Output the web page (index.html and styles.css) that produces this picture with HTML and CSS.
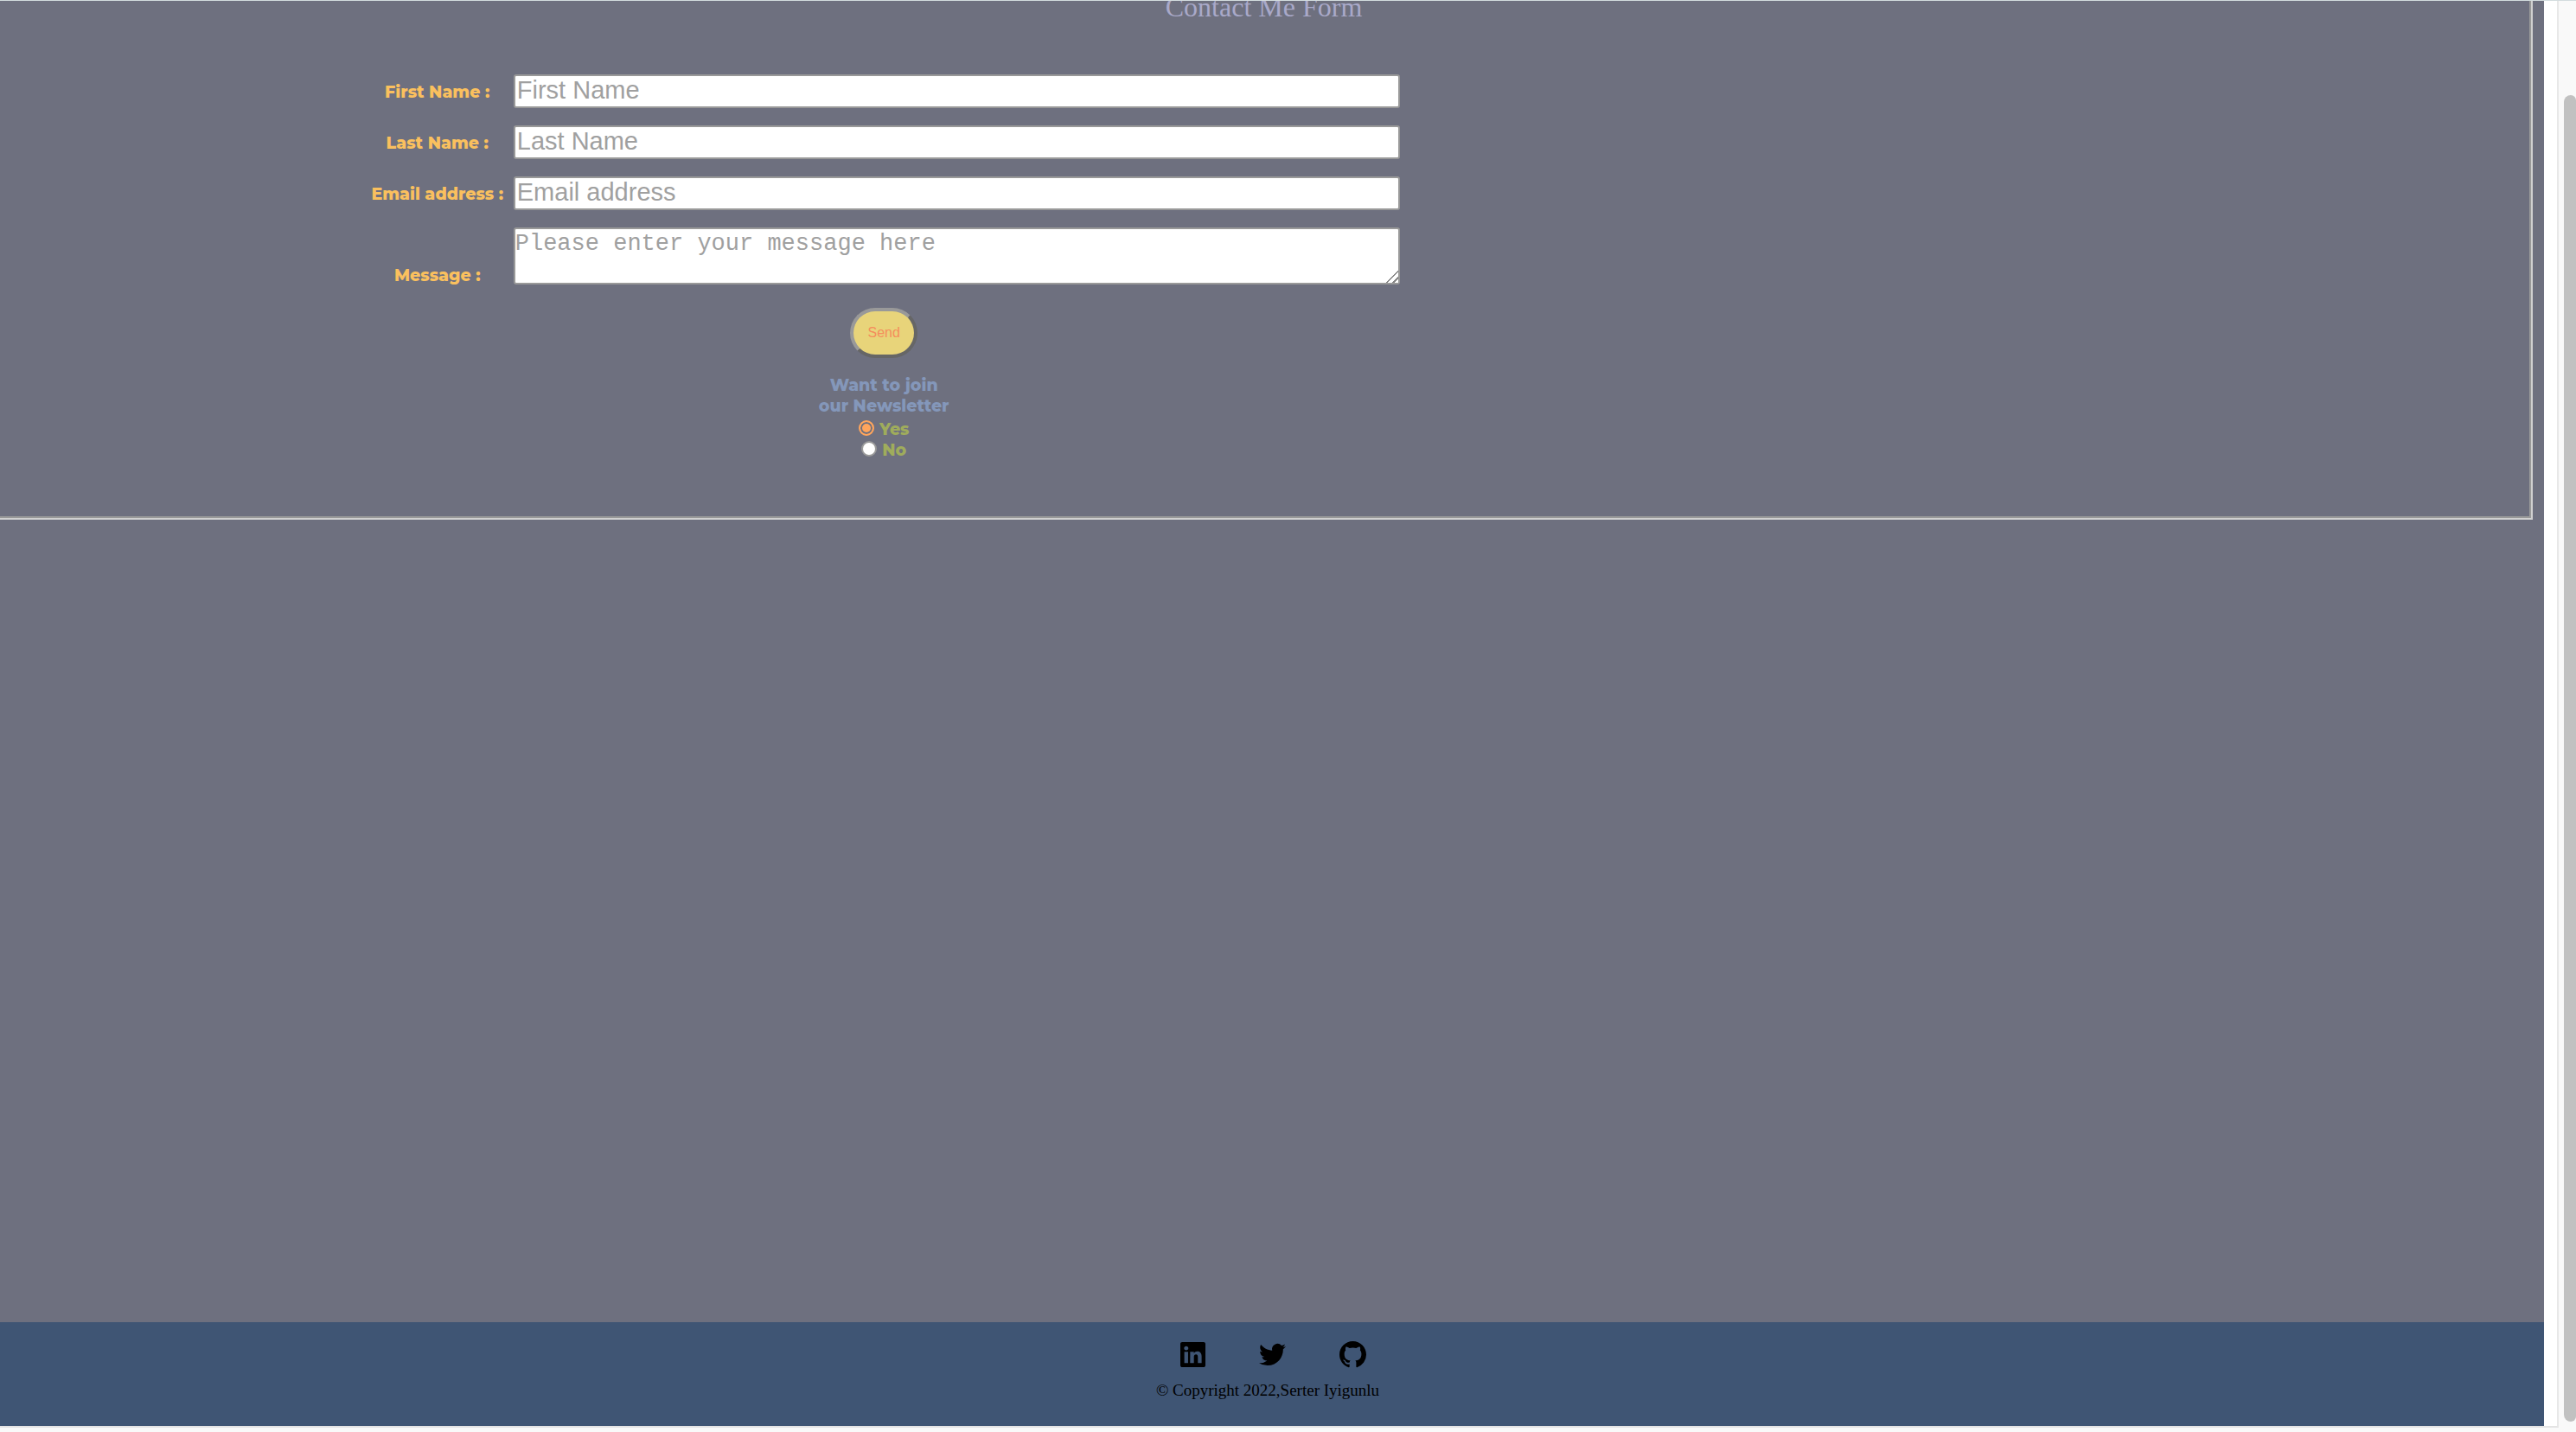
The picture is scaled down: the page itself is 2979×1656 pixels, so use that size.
FILE: index.html
```html
<!DOCTYPE html>
<html lang="en">
<head>
<meta charset="utf-8">
<title>Contact Me</title>
<link rel="stylesheet" href="styles.css">
</head>
<body>
<div class="window">
  <div class="viewport">
    <div class="page">
      <main class="main">
        <section class="contact">
          <h1 class="title">Contact Me Form</h1>
          <form class="form">
            <div class="field">
              <label class="label" for="first">First Name :</label>
              <input class="input" id="first" type="text" placeholder="First Name">
            </div>
            <div class="field">
              <label class="label" for="last">Last Name :</label>
              <input class="input" id="last" type="text" placeholder="Last Name">
            </div>
            <div class="field">
              <label class="label" for="email">Email address :</label>
              <input class="input" id="email" type="email" placeholder="Email address">
            </div>
            <div class="field field-message">
              <label class="label" for="message">Message :</label>
              <textarea class="input message" id="message" placeholder="Please enter your message here"></textarea>
            </div>
            <button class="send" type="button">Send</button>
            <div class="newsletter" role="radiogroup" aria-labelledby="news">
              <p class="question" id="news">Want to join<br>our Newsletter</p>
              <label class="choice"><input class="radio" type="radio" name="news" checked>Yes</label>
              <label class="choice"><input class="radio" type="radio" name="news">No</label>
            </div>
          </form>
        </section>
      </main>
      <footer class="footer">
        <nav class="social">
          <a href="#" aria-label="LinkedIn"><svg class="icon" viewBox="0 0 16 16"><path d="M0 1.146C0 .513.526 0 1.175 0h13.65C15.474 0 16 .513 16 1.146v13.708c0 .633-.526 1.146-1.175 1.146H1.175C.526 16 0 15.487 0 14.854zm4.943 12.248V6.169H2.542v7.225zm-1.2-8.212c.837 0 1.358-.554 1.358-1.248-.015-.709-.52-1.248-1.342-1.248S2.4 3.226 2.4 3.934c0 .694.521 1.248 1.327 1.248zm4.908 8.212V9.359c0-.216.016-.432.08-.586.173-.431.568-.878 1.232-.878.869 0 1.216.662 1.216 1.634v3.865h2.401V9.25c0-2.22-1.184-3.252-2.764-3.252-1.274 0-1.845.7-2.165 1.193v.025h-.016l.016-.025V6.169h-2.4c.03.678 0 7.225 0 7.225z"/></svg></a>
          <a href="#" aria-label="Twitter"><svg class="icon icon-large" viewBox="0 0 24 24"><path d="M23.953 4.57a10 10 0 0 1-2.825.775 4.958 4.958 0 0 0 2.163-2.723c-.951.555-2.005.959-3.127 1.184a4.92 4.92 0 0 0-8.384 4.482C7.69 8.095 4.067 6.13 1.64 3.162a4.822 4.822 0 0 0-.666 2.475c0 1.71.87 3.213 2.188 4.096a4.904 4.904 0 0 1-2.228-.616v.06a4.923 4.923 0 0 0 3.946 4.827 4.996 4.996 0 0 1-2.212.085 4.936 4.936 0 0 0 4.604 3.417 9.867 9.867 0 0 1-6.102 2.105c-.39 0-.779-.023-1.17-.067a13.995 13.995 0 0 0 7.557 2.209c9.053 0 13.998-7.496 13.998-13.985 0-.21 0-.42-.015-.63A9.935 9.935 0 0 0 24 4.59z"/></svg></a>
          <a href="#" aria-label="GitHub"><svg class="icon icon-large" viewBox="0 0 16 16"><path d="M8 0C3.58 0 0 3.58 0 8c0 3.54 2.29 6.53 5.47 7.59.4.07.55-.17.55-.38 0-.19-.01-.82-.01-1.49-2.01.37-2.53-.49-2.69-.94-.09-.23-.48-.94-.82-1.13-.28-.15-.68-.52-.01-.53.63-.01 1.08.58 1.23.82.72 1.21 1.87.87 2.33.66.07-.52.28-.87.51-1.07-1.78-.2-3.64-.89-3.64-3.95 0-.87.31-1.59.82-2.15-.08-.2-.36-1.02.08-2.12 0 0 .67-.21 2.2.82.64-.18 1.32-.27 2-.27s1.36.09 2 .27c1.53-1.04 2.2-.82 2.2-.82.44 1.1.16 1.92.08 2.12.51.56.82 1.27.82 2.15 0 3.07-1.87 3.75-3.65 3.95.29.25.54.73.54 1.48 0 1.07-.01 1.93-.01 2.2 0 .21.15.46.55.38A8.01 8.01 0 0 0 16 8c0-4.42-3.58-8-8-8"/></svg></a>
        </nav>
        <p class="copyright">© Copyright 2022,Serter Iyigunlu</p>
      </footer>
    </div>
  </div>
  <div class="scrollbar"><div class="thumb"></div></div>
</div>
</body>
</html>
```
FILE: styles.css
```css
* {
  box-sizing: border-box;
}

body {
  margin: 0;
  background: #f9f9f9;
  font-family: "Liberation Serif", "Times New Roman", serif;
}

h1,
p {
  margin: 0;
}

.window {
  display: flex;
  height: 100vh;
  border-top: 1px solid #d3dcde;
  overflow: hidden;
}

.viewport {
  flex: 1;
  margin-bottom: 5px;
  padding-right: 15px;
  background: #fff;
  border-right: 2px solid #e8e8e8;
  border-bottom: 2px solid #e4e4e4;
}

.page {
  display: flex;
  flex-direction: column;
  height: 100%;
  overflow: hidden;
}

.main {
  flex: 1;
  padding-right: 13px;
  background: #6e707f;
}

.contact {
  padding-bottom: 66px;
  border: solid #d0d0d0;
  border-width: 0 2px 2px 0;
  box-shadow: inset -2px -2px #999;
}

.title {
  margin-top: -11px;
  padding-right: 4px;
  color: #a9a9c9;
  font-size: 32px;
  font-weight: 400;
  line-height: 36px;
  text-align: center;
}

.form {
  display: flex;
  flex-direction: column;
  gap: 20px;
  width: 41.3%;
  margin-left: 14%;
  padding: 60px 0 0 16px;
}

.field {
  display: grid;
  grid-template-columns: 160px 1fr;
  column-gap: 8px;
  align-items: center;
}

.field-message {
  align-items: end;
}

.label,
.newsletter {
  font-family: Montserrat, Inter, sans-serif;
  font-size: 19px;
  font-weight: 800;
  line-height: 24px;
  text-align: center;
}

.label {
  padding-top: 3px;
  color: #fac05e;
  white-space: nowrap;
}

.field-message .label {
  line-height: 20px;
}

.input {
  width: 100%;
  height: 39px;
  margin: 0;
  padding: 0 2px 2px;
  background: #fff;
  border: 2px solid #999;
  border-radius: 3px;
  font: 29px "Liberation Sans", Arial, sans-serif;
}

.input::placeholder {
  color: #a0a0a0;
}

.message {
  display: block;
  height: 66px;
  padding: 2px 0 0;
  font: 27px "Liberation Mono", "Courier New", monospace;
  resize: vertical;
}

.message::-webkit-resizer {
  background: linear-gradient(135deg, #fff 50%, #888 50%, #888 58%, #fff 58%, #fff 76%, #888 76%, #888 84%, #fff 84%);
}

.send {
  align-self: center;
  width: 78px;
  height: 58px;
  margin-top: 7px;
  padding: 0;
  background: #e8d47a;
  border: 4px solid;
  border-color: #999 #666 #666 #999;
  border-radius: 29px;
  color: #f58e5c;
  font: 16px "Liberation Sans", Arial, sans-serif;
}

.newsletter {
  display: flex;
  flex-direction: column;
  align-items: center;
}

.question {
  margin-bottom: 3px;
  color: #8497ba;
}

.choice {
  display: flex;
  align-items: center;
  gap: 6px;
  color: #9fac5c;
}

.radio {
  appearance: none;
  width: 18px;
  height: 18px;
  margin: 0 0 4px;
  background: #fff;
  border: 2px solid #999;
  border-radius: 50%;
}

.radio:checked {
  background: #ffa55c;
  border-color: #ffa55c;
  box-shadow: inset 0 0 0 2px #6e707f;
}

.footer {
  display: flex;
  flex-direction: column;
  align-items: center;
  gap: 12px;
  height: 120px;
  padding-top: 22px;
  background: #3f5574;
}

.social {
  display: flex;
  align-items: center;
  gap: 62px;
  padding-left: 3px;
}

.social a {
  display: flex;
  color: #000;
}

.icon {
  width: 29px;
  height: 29px;
  fill: currentColor;
}

.icon-large {
  width: 31px;
  height: 31px;
}

.copyright {
  padding-right: 10px;
  color: #000;
  font-size: 19px;
  line-height: 28px;
}

.scrollbar {
  width: 20px;
  padding: 109px 0 12px 6px;
}

.thumb {
  height: 100%;
  background: #c1c1c1;
  border-radius: 8px 6px 6px 8px;
}
```
